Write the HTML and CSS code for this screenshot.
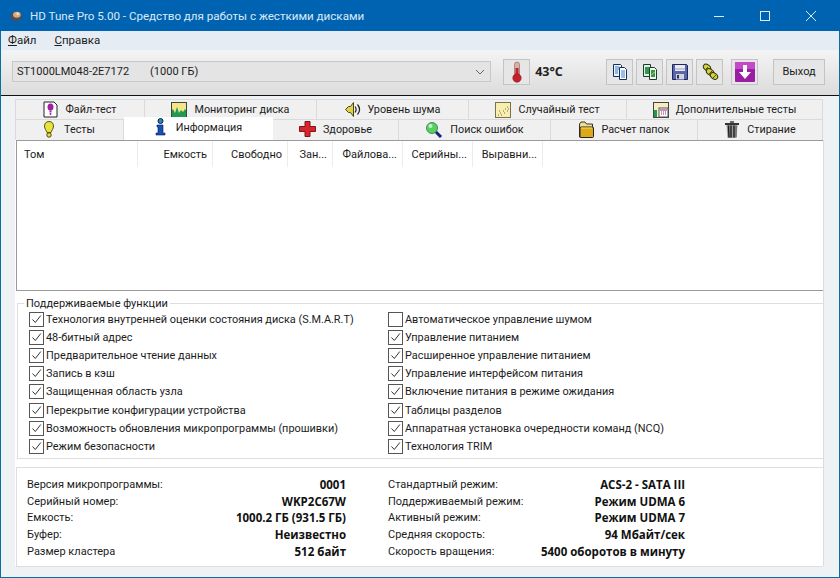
FILE: index.html
```html
<!DOCTYPE html>
<html lang="ru">
<head>
<meta charset="utf-8">
<title>HD Tune Pro 5.00</title>
<link rel="stylesheet" href="styles.css">
</head>
<body>
<div class="window">
  <header class="titlebar">
    <svg class="app-icon" width="14" height="12" viewBox="0 0 16 14"><ellipse cx="8" cy="8" rx="6.5" ry="5" fill="#4a4f5c"/><ellipse cx="9" cy="5.500" rx="4.500" ry="3.500" fill="#e0a874"/><circle cx="10" cy="4.500" r="1.600" fill="#f4e3c8"/></svg>
    <span class="title-text">HD Tune Pro 5.00 - Средство для работы с жесткими дисками</span>
    <div class="caption">
      <svg width="46" height="30" viewBox="0 0 46 30"><path d="M18 15.500h10" stroke="#dfeaf5" fill="none"/></svg>
      <svg width="46" height="30" viewBox="0 0 46 30"><rect x="18.500" y="10.500" width="9" height="9" stroke="#dfeaf5" fill="none"/></svg>
      <svg width="46" height="30" viewBox="0 0 46 30"><path d="M18 10l10 10M28 10l-10 10" stroke="#dfeaf5" fill="none"/></svg>
    </div>
  </header>
  <nav class="menubar"><span><u>Ф</u>айл</span><span><u>С</u>правка</span></nav>
  <div class="toolbar">
    <div class="combo"><span class="combo-model">ST1000LM048-2E7172</span><span>(1000 ГБ)</span>
      <svg class="combo-arrow" width="10" height="6" viewBox="0 0 10 6"><path d="M1 1l4 4 4-4" stroke="#666" fill="none"/></svg>
    </div>
    <button class="tool tool-temp">
      <svg width="12" height="22" viewBox="0 0 12 22"><rect x="3.500" y="1" width="5" height="15" rx="2.500" fill="#d9b0a8" stroke="#8a5a55" stroke-width=".6"/><rect x="4.500" y="7" width="3" height="9" fill="#c8202a"/><circle cx="6" cy="17" r="4.200" fill="#c8202a" stroke="#7c1a20" stroke-width=".6"/></svg>
    </button>
    <strong class="temp">43°C</strong>
    <div class="tool-group">
      <button class="tool"><svg width="18" height="18" viewBox="0 0 18 18"><path d="M2.500 1.500h7l1 1v11h-8z" fill="#eaf2fc" stroke="#1c2c58"/><path d="M8.500 4.500h5l2 2v10h-7z" fill="#fff" stroke="#1c2c58"/><path d="M4 4h4M4 6h4M4 8h3M4 10h3M10 8h4M10 10h4M10 12h4M10 14h4" stroke="#2e7ed0"/></svg></button>
      <button class="tool"><svg width="18" height="18" viewBox="0 0 18 18"><path d="M2.500 1.500h7v12h-7z" fill="#e4efe4" stroke="#1c3c30"/><path d="M8.500 4.500h5l2 2v10h-7z" fill="#f0f6e8" stroke="#1c3c30"/><rect x="4" y="4" width="4" height="7" fill="#2e9a4e"/><rect x="10" y="7" width="4" height="7" fill="#2e9a4e"/><path d="M10.500 12l3-3" stroke="#d8d040"/></svg></button>
      <button class="tool"><svg width="18" height="18" viewBox="0 0 18 18"><path d="M1.500 1.500h14l1 1v14h-15z" fill="#5a66a6" stroke="#1e2560"/><rect x="4" y="2" width="10" height="6" fill="#e8eaf4"/><path d="M4 6h10" stroke="#9aa2c8"/><rect x="5" y="11" width="8" height="5.500" fill="#d0d2de"/><rect x="6" y="12" width="2" height="3.500" fill="#2a2f70"/></svg></button>
      <button class="tool"><svg width="18" height="18" viewBox="0 0 18 18"><g stroke="#2e3008" stroke-width="1" fill="#d4d040"><ellipse cx="6" cy="4.500" rx="4" ry="2.800" transform="rotate(35 6 4.500)"/><ellipse cx="9" cy="9" rx="4" ry="2.800" transform="rotate(35 9 9)"/><ellipse cx="13" cy="13" rx="4" ry="2.800" transform="rotate(35 13 13)"/></g><path d="M4 7l3-3M8 11l3-3M12 15l3-3" stroke="#50500c"/></svg></button>
      <button class="tool tool-save"><svg width="22" height="22" viewBox="0 0 22 22"><rect x="1" y="1" width="20" height="20" rx="1" fill="#9a1ea4"/><rect x="1" y="1" width="20" height="7" fill="#c44ac8"/><path d="M9 4h4v7h4l-6 7-6-7h4z" fill="#fff"/></svg></button>
    </div>
    <button class="tool tool-exit">Выход</button>
  </div>
  <main class="panel">
    <div class="tabs">
      <div class="tab-row">
        <div class="tab t130"><svg width="15" height="17" viewBox="0 0 15 17"><path d="M1 1h10l3 3v12H1z" fill="#fff" stroke="#222"/><ellipse cx="7.500" cy="6" rx="3" ry="3.500" fill="#a01ea4"/><rect x="6.500" y="9.500" width="2" height="2" fill="#a01ea4"/><circle cx="7.500" cy="13" r="1" fill="#a01ea4"/></svg><span>Файл-тест</span></div>
        <div class="tab t172"><svg width="16" height="16" viewBox="0 0 16 16"><rect width="16" height="16" fill="#f4e48c"/><path d="M0 16V9l2-2 2 4 2-6 2 6 2-3 2 2 2-3 2 3v6z" fill="#1f9a50"/><rect x=".5" y=".5" width="15" height="15" fill="none" stroke="#3a4a3a"/></svg><span>Мониторинг диска</span></div>
        <div class="tab t152"><svg width="16" height="15" viewBox="0 0 16 15"><path d="M.5 7.500l3-3h2l3-4v14l-3-4h-2z" fill="#e3d04a" stroke="#4a4418"/><path d="M10 4.500c1.500 2 1.500 4 0 6M12.500 2.500c2.500 3 2.500 7 0 10" stroke="#222" stroke-width="1.200" fill="none"/></svg><span>Уровень шума</span></div>
        <div class="tab t158"><svg width="16" height="16" viewBox="0 0 16 16"><rect x=".5" y=".5" width="15" height="15" fill="#f8eeb0" stroke="#7a7050"/><path d="M3 13h1M5 11h1M6 13h1M8 9h1M9 11h1M10 7h1M12 5h1M12 9h1M13 7h1M4 9h1" stroke="#6a6a40"/></svg><span>Случайный тест</span></div>
        <div class="tab t196"><svg width="16" height="16" viewBox="0 0 16 16"><rect x=".5" y=".5" width="15" height="15" fill="#f6edc0" stroke="#444"/><rect x="1" y="8" width="3" height="7" fill="#1f9a50"/><rect x="6" y="6" width="9" height="9" fill="#fff" stroke="#555"/><path d="M7 8h7M8 10h1M10 10h1M12 10h1M8 12h1M10 12h1M12 12h1" stroke="#8a2a7a"/></svg><span>Дополнительные тесты</span></div>
      </div>
      <div class="tab-row tab-row-front">
        <div class="tab tab-wide t109"><svg width="10" height="17" viewBox="0 0 10 17"><path d="M5 .5c3 0 4.500 2 4.500 4.500 0 3-2 4.500-2.500 6.500H3C2.500 9.500.5 8 .5 5 .5 2.500 2 .5 5 .5z" fill="#e8e23c" stroke="#5a5620"/><circle cx="5" cy="14" r="2.200" fill="#e8e23c" stroke="#4a4618"/></svg><span>Тесты</span></div>
        <div class="tab tab-wide tab-active t149"><svg width="11" height="18" viewBox="0 0 11 18"><circle cx="5.500" cy="3" r="2.500" fill="#1e8ac8" stroke="#123"/><path d="M2 7h6v8h2v2H1v-2h2V9H2z" fill="#1650b8" stroke="#0c1c50" stroke-width=".6"/></svg><span>Информация</span></div>
        <div class="tab t126"><svg width="17" height="16" viewBox="0 0 17 16"><path d="M6 .5h5v5h5.500v5H11v5H6v-5H.5v-5H6z" fill="#d8242c" stroke="#7c1418"/></svg><span>Здоровье</span></div>
        <div class="tab t152"><svg width="18" height="17" viewBox="0 0 18 17"><path d="M10 10l6 6" stroke="#1a2080" stroke-width="3"/><circle cx="7" cy="7" r="5.500" fill="#58d060" stroke="#4a8a60"/><circle cx="5.500" cy="5" r="2" fill="#c4f4c0"/></svg><span>Поиск ошибок</span></div>
        <div class="tab t147"><svg width="16" height="17" viewBox="0 0 16 17"><path d="M1.500 16V3l1.500-2h4l1.500 2h6v13z" fill="#f4e08a" stroke="#333"/><rect x="2" y="6" width="13.500" height="10.500" rx="1" fill="#dcaa18" stroke="#222"/><path d="M3 7h11" stroke="#f4dc70"/></svg><span>Расчет папок</span></div>
        <div class="tab t125"><svg width="16" height="17" viewBox="0 0 16 17"><rect x="1" y="2" width="14" height="2" fill="#333"/><rect x="6" y="0" width="4" height="2" fill="#666"/><path d="M2.500 4h11l-1 13h-9z" fill="#999"/><path d="M4.500 4.500l.5 12M7 4.500v12M10 4.500v12" stroke="#1c1c1c" stroke-width="1.400"/><path d="M12 5v11" stroke="#555"/></svg><span>Стирание</span></div>
      </div>
    </div>
    <div class="content">
      <div class="list">
        <div class="list-head">
          <span class="col c-vol">Том</span>
          <span class="col c75">Емкость</span>
          <span class="col c75">Свободно</span>
          <span class="col c45">Зан...</span>
          <span class="col c70">Файлова...</span>
          <span class="col c70">Серийны...</span>
          <span class="col c70">Выравни...</span>
        </div>
      </div>
      <fieldset class="features">
        <legend>Поддерживаемые функции</legend>
        <div class="feature-grid">
          <label class="chk on">Технология внутренней оценки состояния диска (S.M.A.R.T)</label>
          <label class="chk">Автоматическое управление шумом</label>
          <label class="chk on">48-битный адрес</label>
          <label class="chk on">Управление питанием</label>
          <label class="chk on">Предварительное чтение данных</label>
          <label class="chk on">Расширенное управление питанием</label>
          <label class="chk on">Запись в кэш</label>
          <label class="chk on">Управление интерфейсом питания</label>
          <label class="chk on">Защищенная область узла</label>
          <label class="chk on">Включение питания в режиме ожидания</label>
          <label class="chk on">Перекрытие конфигурации устройства</label>
          <label class="chk on">Таблицы разделов</label>
          <label class="chk on">Возможность обновления микропрограммы (прошивки)</label>
          <label class="chk on">Аппаратная установка очередности команд (NCQ)</label>
          <label class="chk on">Режим безопасности</label>
          <label class="chk on">Технология TRIM</label>
        </div>
      </fieldset>
      <section class="info">
        <dl class="info-col c-left">
          <div><dt>Версия микропрограммы:</dt><dd>0001</dd></div>
          <div><dt>Серийный номер:</dt><dd>WKP2C67W</dd></div>
          <div><dt>Емкость:</dt><dd>1000.2 ГБ (931.5 ГБ)</dd></div>
          <div><dt>Буфер:</dt><dd>Неизвестно</dd></div>
          <div><dt>Размер кластера</dt><dd>512 байт</dd></div>
        </dl>
        <dl class="info-col c-right">
          <div><dt>Стандартный режим:</dt><dd>ACS-2 - SATA III</dd></div>
          <div><dt>Поддерживаемый режим:</dt><dd>Режим UDMA 6</dd></div>
          <div><dt>Активный режим:</dt><dd>Режим UDMA 7</dd></div>
          <div><dt>Средняя скорость:</dt><dd>94 Мбайт/сек</dd></div>
          <div><dt>Скорость вращения:</dt><dd>5400 оборотов в минуту</dd></div>
        </dl>
      </section>
    </div>
  </main>
</div>
</body>
</html>
```
FILE: styles.css
```css
* { box-sizing: border-box; }
html, body { margin: 0; padding: 0; }
body {
  width: 840px; height: 578px; overflow: hidden;
  font: 11px/13px Roboto, "Open Sans", sans-serif;
  color: #1c1c1c;
}
.window {
  width: 840px; height: 578px;
  display: flex; flex-direction: column;
  border: 1px solid #0a6ea6; border-top: 0;
  background: #eff2f5;
}
.titlebar {
  height: 31px; flex: none; margin: 0 -1px;
  background: #0063b1; color: #dce9f5;
  display: flex; align-items: center;
  font: 11.600px Roboto, sans-serif;
}
.app-icon { margin: 0 7px 0 9px; }
.title-text { flex: 1; }
.caption { display: flex; margin-right: 6px; height: 30px; }
.menubar {
  height: 19px; flex: none;
  background: #e6ecf4;
  display: flex; align-items: center; gap: 18px;
  padding-left: 7px;
  font-size: 11.500px;
}
.toolbar {
  height: 46px; flex: none;
  background: linear-gradient(#f4f4f4, #dcdcdc);
  border-bottom: 1px solid #111;
  display: flex; align-items: center;
  padding: 0 14px 2px 11px;
}
.combo {
  width: 480px; height: 21px;
  border: 1px solid #c8c8c8;
  background: #e4e4e4;
  display: flex; align-items: center;
  padding-left: 4px;
  margin-right: 12px;
}
.combo-model { margin-right: 21px; }
.combo-arrow { margin-left: auto; margin-right: 5px; }
.tool {
  width: 27px; height: 26px; padding: 0;
  border: 1px solid #c4c4c4;
  background: #e6e6e6;
  display: flex; align-items: center; justify-content: center;
  font: inherit; color: inherit;
}
.temp { margin-left: 5px; width: 71px; font: 700 12.500px "Open Sans", sans-serif; color: #222; }
.tool-group { display: flex; gap: 3px; }
.tool-save { margin-left: 5px; }
.tool-exit { width: 52px; margin-left: 15px; }
.panel {
  flex: 1; min-height: 0;
  padding: 3px 14px 11px 14px;
  display: flex; flex-direction: column;
}
.tab-row { display: flex; height: 20px; }
.tab-row-front { height: 21px; }
.tab-row-front .tab { padding-bottom: 2px; }
.tab {
  display: flex; align-items: center; justify-content: center; gap: 7px;
  background: #f0f0f0;
  border: 1px solid #dadada; border-bottom: 0;
  border-left-width: 0;
  font-size: 10.800px;
}
.tab-wide { gap: 10px; }
.tab:first-child { border-left-width: 1px; }
.t130 { width: 130px; } .t172 { width: 172px; } .t152 { width: 152px; }
.t158 { width: 158px; } .t196 { width: 196px; } .t109 { width: 109px; }
.t149 { width: 149px; } .t126 { width: 126px; } .t147 { width: 147px; }
.t125 { width: 125px; }
.tab-row-front .tab-active {
  background: #fff; border: 0;
  height: 23px; margin-top: -2px; padding-bottom: 3px;
}
.content {
  flex: 1; min-height: 0;
  background: #fff;
  border-right: 1px solid #dcdcdc;
  padding-left: 1px;
  margin-right: 1px;
  display: flex; flex-direction: column;
}
.list {
  height: 151px; flex: none;
  border: 1px solid #9a9a9a; border-width: 1px 0 1px 1px;
  background: #fff;
}
.list-head { display: flex; height: 26px; }
.col {
  border-right: 1px solid #ececec;
  padding: 0 5px;
  text-align: right;
  line-height: 28px;
  white-space: nowrap;
}
.c-vol { width: 121px; text-align: left; padding-left: 7px; }
.c75 { width: 75px; } .c45 { width: 45px; } .c70 { width: 70px; }
.features {
  margin: 6px 0 0 1px; padding: 0;
  height: 162px; flex: none;
  border: 1px solid #dedede; border-right: 0; min-width: 0;
}
.features legend { padding: 0 2px; margin-left: 6px; font-size: 11px; line-height: 13px; }
.feature-grid {
  display: grid;
  grid-template-columns: 359px 1fr;
  grid-auto-rows: 18.200px;
  padding-left: 11px;
}
.chk { display: flex; align-items: center; gap: 2px; white-space: nowrap; font-size: 10.900px; }
.chk::before {
  content: ""; width: 13px; height: 13px; flex: none;
  border: 1px solid #555; background: #fff center/11px 11px no-repeat;
}
.chk.on::before {
  background-image: url("data:image/svg+xml,%3Csvg xmlns='http://www.w3.org/2000/svg' viewBox='0 0 11 11'%3E%3Cpath d='M1.500 5.500l2.800 3 5.500-7' fill='none' stroke='%23333'/%3E%3C/svg%3E");
}
.info {
  margin: 8px 0 0 0; height: 100px; flex: none;
  border: 1px solid #dedede; border-right: 0;
  display: flex;
  padding: 8px 0 0 10px;
}
.info-col { margin: 0; }
.info-col > div { display: flex; justify-content: space-between; height: 16.700px; align-items: center; }
.info-col dt, .info-col dd { margin: 0; white-space: nowrap; }
.info-col dd { font: 700 11.500px/13px "Open Sans", sans-serif; color: #111; }
.c-left { width: 319px; margin-right: 42px; }
.c-right { width: 297px; }
```
